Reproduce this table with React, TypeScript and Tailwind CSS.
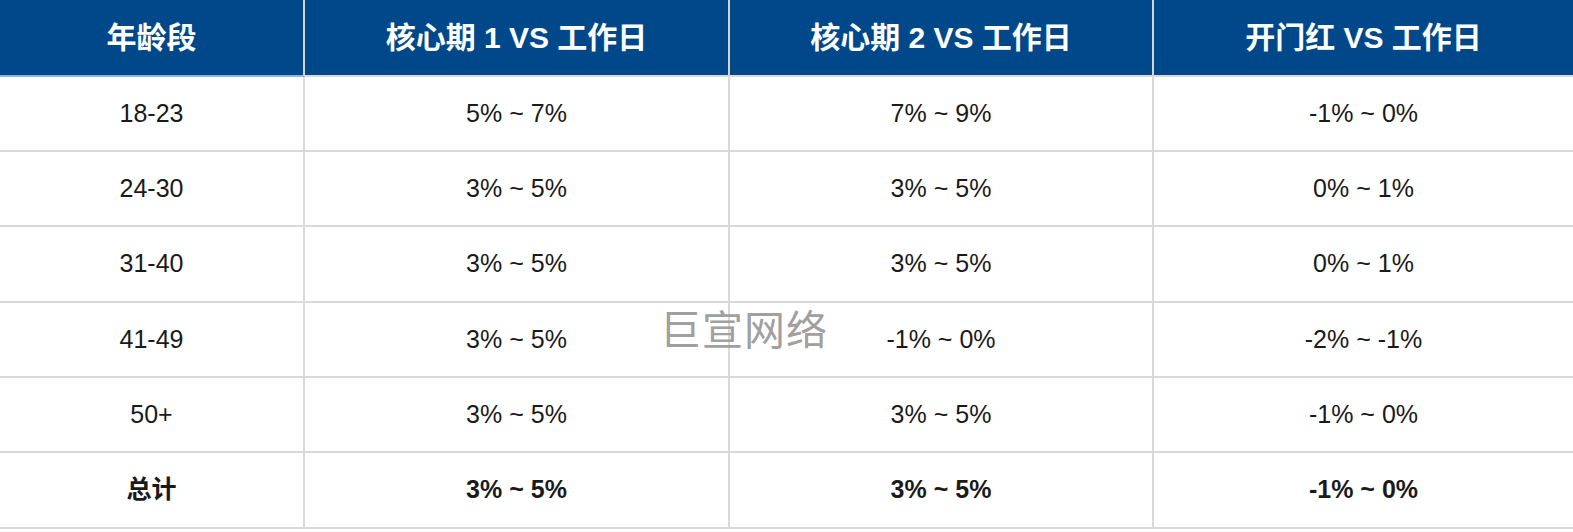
const HEADERS = ['年龄段', '核心期 1 VS 工作日', '核心期 2 VS 工作日', '开门红 VS 工作日']

const ROWS: string[][] = [
  ['18-23', '5% ~ 7%', '7% ~ 9%', '-1% ~ 0%'],
  ['24-30', '3% ~ 5%', '3% ~ 5%', '0% ~ 1%'],
  ['31-40', '3% ~ 5%', '3% ~ 5%', '0% ~ 1%'],
  ['41-49', '3% ~ 5%', '-1% ~ 0%', '-2% ~ -1%'],
  ['50+', '3% ~ 5%', '3% ~ 5%', '-1% ~ 0%'],
]

const TOTAL = ['总计', '3% ~ 5%', '3% ~ 5%', '-1% ~ 0%']

const COLS = ['w-[305px] border-r-2', 'w-[425px] border-r-2', 'w-[424px] border-r-2', 'flex-1']

// rows are ~75.3px apart in the screenshot, so every third one gets an extra pixel
const ROW_H = ['h-[75px]', 'h-[75px]', 'h-[76px]', 'h-[75px]', 'h-[75px]', 'h-[76px]']

const font = { fontFamily: '"Liberation Sans", Arial, "Noto Sans CJK SC", sans-serif' }

export default function App() {
  return (
    <div className="relative h-[532px] w-[1573px] bg-white" style={font}>
      <div className="flex h-[77px] bg-[#004889]">
        {HEADERS.map((h, i) => (
          <div
            key={h}
            className={`flex items-center justify-center border-b-2 text-[30px] font-bold text-white ${COLS[i]} border-r-[#d4d4d4] ${i === 0 ? 'border-b-[#8fb1e3]' : 'border-b-[#d9d9d9]'}`}
          >
            {h}
          </div>
        ))}
      </div>

      {[...ROWS, TOTAL].map((row, r) => (
        <div key={r} className={`flex ${ROW_H[r]}`}>
          {row.map((cell, i) => (
            <div
              key={i}
              className={`flex items-center justify-center border-b-2 border-[#d9d9d9] text-[25px] text-[#1a1a1a] ${COLS[i]} ${r === ROWS.length ? 'font-bold' : ''}`}
            >
              {cell}
            </div>
          ))}
        </div>
      ))}

      <div className="pointer-events-none absolute left-[660px] top-[311px] text-[41px] leading-none tracking-[1px] text-[#a0a0a0]">
        巨宣网络
      </div>
    </div>
  )
}
